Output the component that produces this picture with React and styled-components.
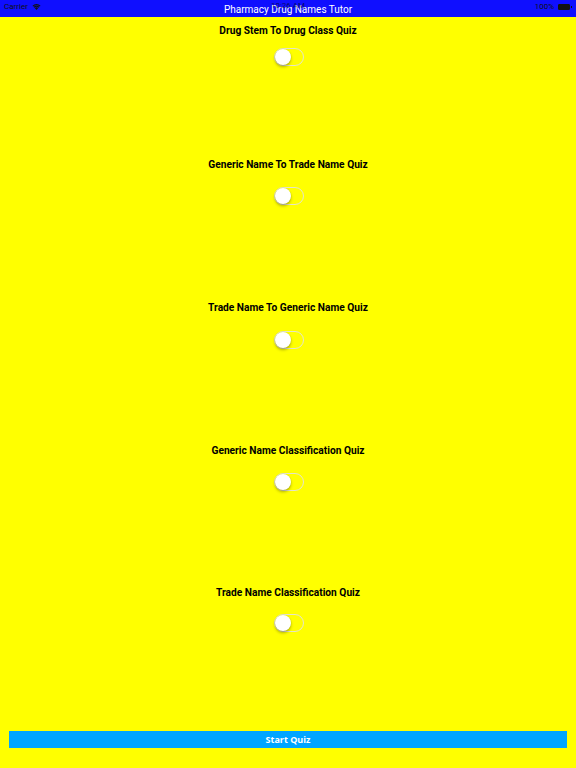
import React, { useState } from "react";
import styled, { createGlobalStyle } from "styled-components";

const GlobalStyle = createGlobalStyle`
  html, body {
    margin: 0;
    padding: 0;
    background: #ffff00;
  }
  body {
    font-family: Roboto, "Liberation Sans", Arial, sans-serif;
  }
`;

const Screen = styled.div`
  width: 576px;
  height: 768px;
  display: flex;
  flex-direction: column;
  background: #ffff00;
  overflow: hidden;
`;

const StatusBar = styled.div`
  position: relative;
  height: 17px;
  background: #0f0fff;
  display: flex;
  align-items: center;
  justify-content: space-between;
  padding: 0 4px;
  box-sizing: border-box;
  flex-shrink: 0;
`;

const StatusSide = styled.div`
  display: flex;
  align-items: center;
  gap: 4px;
  margin-top: -4px;
  font-size: 8px;
  color: #111;
  z-index: 1;
`;

const Title = styled.div`
  position: absolute;
  left: 0;
  right: 0;
  top: 0;
  height: 17px;
  line-height: 19px;
  text-align: center;
  color: #ffffff;
  font-size: 10px;
  font-family: Roboto, "Liberation Sans", Arial, sans-serif;
`;

const Clock = styled.div`
  position: absolute;
  left: 0;
  right: 0;
  top: 0;
  line-height: 11px;
  text-align: center;
  font-size: 8px;
  color: rgba(0, 0, 0, 0.6);
`;

const Battery = styled.span`
  display: inline-block;
  width: 10px;
  height: 4px;
  background: #111;
  border: 1px solid #111;
  border-radius: 1px;
  position: relative;
  margin-right: 2px;
  &::after {
    content: "";
    position: absolute;
    right: -3px;
    top: 1px;
    width: 1px;
    height: 2px;
    background: #111;
  }
`;

const Section = styled.div`
  display: flex;
  flex-direction: column;
  align-items: center;
  margin-top: ${(p) => p.$top}px;
`;

const Label = styled.div`
  height: 14px;
  line-height: 14px;
  font-size: 10.2px;
  font-weight: bold;
  color: #000;
  text-align: center;
`;

const Track = styled.button`
  margin-top: ${(p) => p.$gap}px;
  margin-left: 1px;
  position: relative;
  width: 30px;
  height: 18px;
  padding: 0;
  border-radius: 9px;
  border: 1px solid ${(p) => (p.$on ? "#4cd964" : "rgba(225,225,225,0.9)")};
  background: ${(p) => (p.$on ? "#4cd964" : "transparent")};
  box-sizing: border-box;
  cursor: pointer;
`;

const Knob = styled.span`
  position: absolute;
  top: 0;
  left: ${(p) => (p.$on ? "12px" : "0")};
  width: 16px;
  height: 16px;
  border-radius: 50%;
  background: #ffffff;
  box-shadow: 0 2px 3px rgba(0, 0, 0, 0.3), 0 0 0 0.5px rgba(0, 0, 0, 0.08);
  transition: left 0.2s;
`;

const StartButton = styled.button`
  margin: ${(p) => p.$top}px 9px 0 9px;
  height: 17px;
  border: none;
  padding: 0;
  background: #00a5ff;
  color: #ffffff;
  font-family: "Open Sans", "Liberation Sans", Arial, sans-serif;
  font-size: 9px;
  font-weight: bold;
  cursor: pointer;
`;

function Toggle({ gap }) {
  const [on, setOn] = useState(false);
  return (
    <Track $gap={gap} $on={on} onClick={() => setOn(!on)} aria-pressed={on}>
      <Knob $on={on} />
    </Track>
  );
}

function Wifi() {
  return (
    <svg width="9" height="7" viewBox="0 0 18 14">
      <path d="M9 14 L5.5 10.2 A5 5 0 0 1 12.5 10.2 Z" fill="#111" />
      <path d="M3.3 7.8 A8.5 8.5 0 0 1 14.7 7.8 L13.3 9.3 A6.5 6.5 0 0 0 4.7 9.3 Z" fill="#111" />
      <path d="M1 5.3 A11.8 11.8 0 0 1 17 5.3 L15.6 6.8 A9.8 9.8 0 0 0 2.4 6.8 Z" fill="#111" />
    </svg>
  );
}

const quizzes = [
  { name: "Drug Stem To Drug Class Quiz", top: 7, gap: 10 },
  { name: "Generic Name To Trade Name Quiz", top: 92, gap: 15 },
  { name: "Trade Name To Generic Name Quiz", top: 96, gap: 16 },
  { name: "Generic Name Classification Quiz", top: 95, gap: 15 },
  { name: "Trade Name Classification Quiz", top: 95, gap: 14 },
];

export default function App() {
  return (
    <>
      <GlobalStyle />
      <Screen>
        <StatusBar>
          <StatusSide>
            <span>Carrier</span>
            <Wifi />
          </StatusSide>
          <Title>Pharmacy Drug Names Tutor</Title>
          <Clock>10:26 AM</Clock>
          <StatusSide>
            <span>100%</span>
            <Battery />
          </StatusSide>
        </StatusBar>
        {quizzes.map((q) => (
          <Section key={q.name} $top={q.top}>
            <Label>{q.name}</Label>
            <Toggle gap={q.gap} />
          </Section>
        ))}
        <StartButton $top={99}>Start Quiz</StartButton>
      </Screen>
    </>
  );
}
